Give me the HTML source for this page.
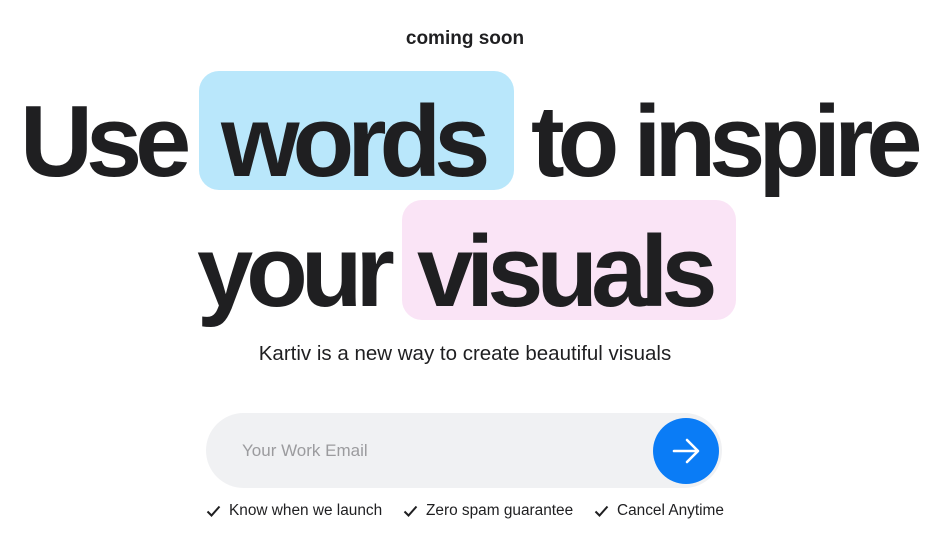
<!DOCTYPE html>
<html><head><meta charset="utf-8"><style>
body{margin:0;width:945px;height:540px;background:#fff;position:relative;overflow:hidden;font-family:"Liberation Sans",sans-serif;color:#1f1f21}
.a{position:absolute;white-space:nowrap}
.big{font-size:101px;font-weight:bold;letter-spacing:-7px;line-height:1}
.box{position:absolute;border-radius:20px}
.chk{font-size:15.4px;top:502px}
.chk svg{vertical-align:-2px;margin-right:8px}
</style></head><body>
<div class="a" style="left:0;width:930px;text-align:center;top:28px;font-size:19px;font-weight:bold">coming soon</div>
<div class="box" style="left:199px;top:71px;width:315px;height:119px;background:#b9e7fb"></div>
<div class="box" style="left:402px;top:200px;width:334px;height:120px;background:#fae4f6"></div>
<div class="a big" style="left:20px;top:92px">Use</div>
<div class="a big" style="left:221px;top:92px">words</div>
<div class="a big" style="left:531px;top:92px">to inspire</div>
<div class="a big" style="left:197px;top:222px">your</div>
<div class="a big" style="left:417px;top:222px">visuals</div>
<div class="a" style="left:0;width:930px;text-align:center;top:342px;font-size:20.5px">Kartiv is a new way to create beautiful visuals</div>
<div class="a" style="left:206px;top:413px;width:516px;height:75px;border-radius:38px;background:#f0f1f3"></div>
<div class="a" style="left:242px;top:441px;font-size:17px;color:#9b9b9e">Your Work Email</div>
<div class="a" style="left:653px;top:418px;width:66px;height:66px;border-radius:50%;background:#0a7cf6">
<svg width="66" height="66" viewBox="0 0 66 66"><path d="M21 33H44M34 22L45 33L34 44" stroke="#fff" stroke-width="2.6" fill="none" stroke-linecap="round" stroke-linejoin="round"/></svg></div>
<div class="a chk" style="left:206px"><svg width="15" height="12" viewBox="0 0 15 12"><path d="M1.5 6.5L5.5 10.5L13.5 1.5" stroke="#1f1f21" stroke-width="2" fill="none"/></svg>Know when we launch</div>
<div class="a chk" style="left:403px"><svg width="15" height="12" viewBox="0 0 15 12"><path d="M1.5 6.5L5.5 10.5L13.5 1.5" stroke="#1f1f21" stroke-width="2" fill="none"/></svg>Zero spam guarantee</div>
<div class="a chk" style="left:594px"><svg width="15" height="12" viewBox="0 0 15 12"><path d="M1.5 6.5L5.5 10.5L13.5 1.5" stroke="#1f1f21" stroke-width="2" fill="none"/></svg>Cancel Anytime</div>
</body></html>
